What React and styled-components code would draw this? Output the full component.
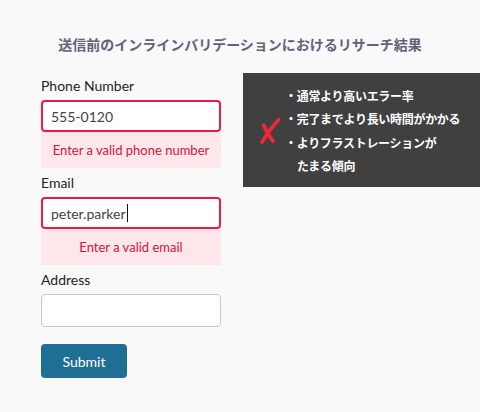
import React from 'react';
import styled, { createGlobalStyle } from 'styled-components';

const GlobalStyle = createGlobalStyle`
  body {
    margin: 0;
    background: #f9f9f9;
    font-family: Lato, "Noto Sans", "Noto Sans CJK JP", sans-serif;
  }
`;

const Page = styled.div`
  width: 480px;
  height: 412px;
  overflow: hidden;
`;

const Title = styled.h1`
  margin: 34px 0 19px;
  font-family: "Noto Sans CJK JP", sans-serif;
  font-size: 14px;
  line-height: 20px;
  font-weight: 700;
  color: #62627a;
  text-align: center;
`;

const Row = styled.div`
  display: flex;
  align-items: flex-start;
  gap: 22px;
  padding-left: 41px;
`;

const Form = styled.form`
  width: 180px;
  padding-top: 4px;
  display: flex;
  flex-direction: column;
`;

const Group = styled.div`
  margin-bottom: 6px;
`;

const Label = styled.div`
  font-size: 14px;
  line-height: 18px;
  color: #1e1e1e;
  margin-bottom: 5px;
`;

const Field = styled.div`
  box-sizing: border-box;
  height: ${p => (p.invalid ? 32 : 33)}px;
  background: #fff;
  border: ${p => (p.invalid ? '2px solid #f0184a' : '1px solid #c9c9c9')};
  border-radius: 4px;
  padding: 0 ${p => (p.invalid ? 8 : 9)}px;
  display: flex;
  align-items: center;
  font-size: 14px;
  color: #444;
`;

const Caret = styled.span`
  display: inline-block;
  width: 1px;
  height: 18px;
  background: #111;
  margin-left: 1px;
`;

const Error = styled.div`
  height: 36px;
  background: #fde7ea;
  color: #d3143c;
  font-size: 13px;
  display: flex;
  align-items: center;
  justify-content: center;
`;

const Submit = styled.button`
  margin-top: 11px;
  width: 86px;
  height: 34px;
  border: none;
  border-radius: 4px;
  background: #1f6f95;
  color: #fff;
  font-family: Lato, sans-serif;
  font-size: 14px;
  font-weight: 400;
  padding: 0;
`;

const Panel = styled.div`
  flex: 1;
  height: 114px;
  box-sizing: border-box;
  background: #404040;
  display: flex;
  align-items: center;
  padding-left: 16px;
  gap: 4px;
`;

const Cross = styled.svg`
  flex: none;
  margin-top: 2px;
`;

const List = styled.ul`
  list-style: none;
  margin: 0;
  padding: 0;
  padding-top: 1px;
`;

const Item = styled.li`
  font-family: "Noto Sans CJK JP", sans-serif;
  font-size: 12px;
  font-weight: 700;
  line-height: 23.5px;
  color: #fff;
  padding-left: 12px;
  text-indent: -12px;
  letter-spacing: -0.3px;
`;

export default function App() {
  return (
    <Page>
      <GlobalStyle />
      <Title>送信前のインラインバリデーションにおけるリサーチ結果</Title>
      <Row>
        <Form onSubmit={e => e.preventDefault()}>
          <Group>
            <Label>Phone Number</Label>
            <Field invalid>555-0120</Field>
            <Error>Enter a valid phone number</Error>
          </Group>
          <Group>
            <Label>Email</Label>
            <Field invalid>
              peter.parker
              <Caret />
            </Field>
            <Error>Enter a valid email</Error>
          </Group>
          <Group>
            <Label>Address</Label>
            <Field />
          </Group>
          <div>
            <Submit type="submit">Submit</Submit>
          </div>
        </Form>
        <Panel>
          <Cross width="22" height="28" viewBox="0 0 22 28">
            <g fill="none" stroke="#f2283a" strokeWidth="3.6" strokeLinecap="round">
              <path d="M19.7 2.7 Q11 12 3 25" />
              <path d="M4.5 8 Q8 17 14 24" />
            </g>
          </Cross>
          <List>
            <Item>・通常より高いエラー率</Item>
            <Item>・完了までより長い時間がかかる</Item>
            <Item>
              ・よりフラストレーションが
              <br />
              たまる傾向
            </Item>
          </List>
        </Panel>
      </Row>
    </Page>
  );
}
